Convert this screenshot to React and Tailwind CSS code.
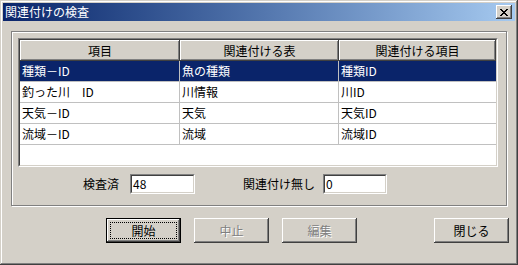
import React from "react";

const rows = [
  { item: "種類－ID", table: "魚の種類", field: "種類ID", selected: true },
  { item: "釣った川　ID", table: "川情報", field: "川ID" },
  { item: "天気－ID", table: "天気", field: "天気ID" },
  { item: "流域－ID", table: "流域", field: "流域ID" },
];

const raised =
  "shadow-[inset_-1px_-1px_#404040,inset_1px_1px_#ffffff,inset_-2px_-2px_#808080,inset_2px_2px_#d4d0c8]";

// sunken 2px frame around edit boxes and the list
const Sunken = ({ className = "", children }) => (
  <div className={`border border-t-[#808080] border-l-[#808080] border-b-white border-r-white ${className}`}>
    <div className="h-full border border-t-[#404040] border-l-[#404040] border-b-[#d4d0c8] border-r-[#d4d0c8] bg-white">
      {children}
    </div>
  </div>
);

const Button = ({ label, isDefault, disabled, className = "" }) => {
  if (isDefault) {
    return (
      <div className={`w-[75px] h-[25px] border border-black bg-[#d4d0c8] ${className}`}>
        <div className={`h-full ${raised} p-[3px]`}>
          <div className="h-full border border-dotted border-black flex items-center justify-center">
            {label}
          </div>
        </div>
      </div>
    );
  }
  return (
    <div
      className={`w-[75px] h-[25px] bg-[#d4d0c8] ${raised} flex items-center justify-center ${
        disabled ? "text-[#808080] [text-shadow:1px_1px_0_#ffffff]" : "text-black"
      } ${className}`}
    >
      {label}
    </div>
  );
};

const colW = ["w-[160px]", "w-[159px]", "w-[157px]"];

export default function App() {
  return (
    <div
      className="w-[518px] h-[265px] bg-[#d4d0c8] p-[3px] flex flex-col text-[12px] leading-none text-black shadow-[inset_-1px_-1px_#404040,inset_1px_1px_#d4d0c8,inset_-2px_-2px_#808080,inset_2px_2px_#ffffff]"
      style={{ fontFamily: '"Noto Sans CJK JP", "Noto Sans", sans-serif' }}
    >
      {/* title bar */}
      <div className="h-[18px] flex items-center justify-between bg-gradient-to-r from-[#0a246a] to-[#a6caf0] pl-[2px] pr-[3px]">
        <span className="text-white text-[12px]">関連付けの検査</span>
        <div className={`w-[16px] h-[14px] bg-[#d4d0c8] ${raised} flex items-center justify-center`}>
          <svg width="8" height="7" viewBox="0 0 8 7" shapeRendering="crispEdges">
            <path d="M0 0h2v1H0zM6 0h2v1H6zM1 1h2v1H1zM5 1h2v1H5zM2 2h4v1H2zM3 3h2v1H3zM2 4h4v1H2zM1 5h2v1H1zM5 5h2v1H5zM0 6h2v1H0zM6 6h2v1H6z" fill="#000" />
          </svg>
        </div>
      </div>

      {/* body */}
      <div className="flex flex-col pl-[8px] pt-[10px]">
        <div className="w-[496px] h-[175px] border border-[#808080] shadow-[inset_1px_1px_#ffffff,1px_1px_0_#ffffff] pl-[6px] pt-[6px] flex flex-col">
          <Sunken className="w-[480px] h-[129px]">
            <div className="flex flex-col h-full overflow-hidden">
              <div className="flex h-[21px] shrink-0">
                {["項目", "関連付ける表", "関連付ける項目"].map((h, i) => (
                  <div
                    key={h}
                    className={`${colW[i]} bg-[#d4d0c8] ${raised} flex items-center justify-center shrink-0`}
                  >
                    {h}
                  </div>
                ))}
              </div>
              {rows.map((r) => (
                <div
                  key={r.item}
                  className={`flex h-[21px] shrink-0 border-b border-[#c0c0c0] ${
                    r.selected ? "bg-[#0a246a] text-white" : ""
                  }`}
                >
                  {[r.item, r.table, r.field].map((c, i) => (
                    <div
                      key={i}
                      className={`${colW[i]} shrink-0 flex items-center pl-[2px] ${
                        i < 2 ? "border-r border-[#c0c0c0]" : ""
                      }`}
                    >
                      {c}
                    </div>
                  ))}
                </div>
              ))}
            </div>
          </Sunken>

          <div className="flex items-center mt-[7px] h-[20px]">
            <span className="ml-[65px] w-[36px]">検査済</span>
            <Sunken className="ml-[11px] w-[65px] h-[20px]">
              <div className="h-full flex items-center pl-[1px]">48</div>
            </Sunken>
            <span className="ml-[48px]">関連付け無し</span>
            <Sunken className="ml-[8px] w-[64px] h-[20px]">
              <div className="h-full flex items-center pl-[1px]">0</div>
            </Sunken>
          </div>
        </div>

        <div className="flex mt-[12px] pl-[95px]">
          <Button label="開始" isDefault />
          <Button label="中止" disabled className="ml-[13px]" />
          <Button label="編集" disabled className="ml-[13px]" />
          <Button label="閉じる" className="ml-[77px]" />
        </div>
      </div>
    </div>
  );
}
